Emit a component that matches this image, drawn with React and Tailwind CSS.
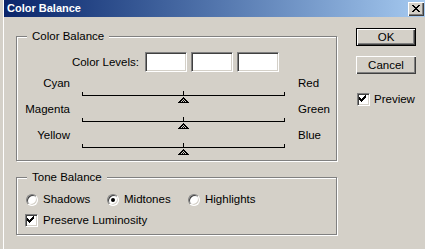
const etched = 'relative border border-[#808080] shadow-[inset_1px_1px_0_#fff,1px_1px_0_#fff]';
const sunken =
  'border border-t-[#808080] border-l-[#808080] border-b-white border-r-white bg-white shadow-[inset_1px_1px_0_#404040,inset_-1px_-1px_0_#d4d0c8]';

function Group({ label, className, children }) {
  return (
    <div className={`${etched} ${className}`}>
      <span className="absolute left-[10px] top-[-7px] bg-[#d4d0c8] px-[5px] leading-[13px]">{label}</span>
      {children}
    </div>
  );
}

function Thumb({ cx, y }) {
  const px = [];
  for (let i = 0; i < 6; i++) {
    for (let x = cx - i; x <= cx + i; x++) {
      const edge = x === cx - i || x === cx + i || i === 5;
      const dark = edge || (x + i) % 2 === 0;
      px.push(<rect key={`${i}-${x}`} x={x} y={y + i} width="1" height="1" fill={dark ? '#000' : '#d4d0c8'} />);
    }
  }
  return px;
}

function Slider({ left, right }) {
  return (
    <div className="h-[26px]">
      <div className="flex h-[13px] leading-[13px]">
        <span className="w-[53px] text-right">{left}</span>
        <span className="ml-[228px]">{right}</span>
      </div>
      <svg width="203" height="13" className="ml-[65px] block" shapeRendering="crispEdges">
        <rect x="0" y="5" width="203" height="1" fill="#000" />
        <rect x="0" y="2" width="1" height="3" fill="#000" />
        <rect x="202" y="2" width="1" height="3" fill="#000" />
        <rect x="101" y="1" width="1" height="4" fill="#000" />
        <Thumb cx={101} y={7} />
      </svg>
    </div>
  );
}

function Check({ checked }) {
  return (
    <div className={`h-[13px] w-[13px] ${sunken}`}>
      {checked && (
        <svg width="11" height="11" className="block" shapeRendering="crispEdges">
          {[2, 3, 4, 5, 6, 7, 8].map((x, i) => {
            const top = [4, 5, 6, 5, 4, 3, 2][i];
            return <rect key={x} x={x - 1} y={top - 1} width="1" height="3" fill="#000" />;
          })}
        </svg>
      )}
    </div>
  );
}

function Radio({ label, selected }) {
  return (
    <div className="flex w-[81px] items-center">
      <div className="flex h-[12px] w-[12px] items-center justify-center rounded-full border border-t-[#808080] border-l-[#808080] border-b-white border-r-white bg-white shadow-[inset_1px_1px_0_#404040,inset_-1px_-1px_0_#d4d0c8]">
        {selected && <div className="h-[4px] w-[4px] rounded-full bg-black" />}
      </div>
      <span className="ml-[5px] leading-[13px]">{label}</span>
    </div>
  );
}

function Button({ children, primary }) {
  const face = (
    <div className="flex h-full w-full items-center justify-center bg-[#d4d0c8] shadow-[inset_1px_1px_0_#fff,inset_-1px_-1px_0_#404040,inset_-2px_-2px_0_#808080] leading-[13px]">
      {children}
    </div>
  );
  return primary ? (
    <div className="h-[18px] w-[60px] border border-black">{face}</div>
  ) : (
    <div className="h-[18px] w-[60px]">{face}</div>
  );
}

export default function App() {
  return (
    <div className="h-[249px] w-[425px] overflow-hidden bg-[#d4d0c8] pl-[3px] font-['Liberation_Sans',Arial,sans-serif] text-[11.5px] text-black">
      <div className="h-full border-l border-white">
        <div className="flex h-[17px] items-center justify-between bg-linear-to-r from-[#0a246a] to-[#a6caf0] pl-[3px] pr-[1px]">
          <span className="text-[11px] font-bold leading-[13px] text-white">Color Balance</span>
          <div className="flex h-[14px] w-[16px] items-center justify-center bg-[#d4d0c8] shadow-[inset_1px_1px_0_#fff,inset_-1px_-1px_0_#404040,inset_-2px_-2px_0_#808080]">
            <svg width="8" height="7" className="mb-[1px] block" shapeRendering="crispEdges">
              <path d="M0 0h2v1h-2zM6 0h2v1h-2zM1 1h2v1h-2zM5 1h2v1h-2zM2 2h4v1h-4zM3 3h2v1h-2zM2 4h4v1h-4zM1 5h2v1h-2zM5 5h2v1h-2zM0 6h2v1h-2zM6 6h2v1h-2z" fill="#000" />
            </svg>
          </div>
        </div>

        <div className="flex items-start pl-[12px]">
          <div className="flex flex-col">
            <Group label="Color Balance" className="mt-[19px] h-[125px] w-[321px] pt-[15px]">
              <div className="flex h-[20px] items-center">
                <span className="w-[122px] text-right leading-[13px]">Color Levels:</span>
                <div className="ml-[6px] flex gap-[4px]">
                  <div className={`h-[20px] w-[42px] ${sunken}`} />
                  <div className={`h-[20px] w-[42px] ${sunken}`} />
                  <div className={`h-[20px] w-[42px] ${sunken}`} />
                </div>
              </div>
              <div className="mt-[5px]">
                <Slider left="Cyan" right="Red" />
                <Slider left="Magenta" right="Green" />
                <Slider left="Yellow" right="Blue" />
              </div>
            </Group>

            <Group label="Tone Balance" className="mt-[16px] h-[58px] w-[321px] pt-[15px]">
              <div className="flex h-[13px] items-center pl-[9px]">
                <Radio label="Shadows" />
                <Radio label="Midtones" selected />
                <Radio label="Highlights" />
              </div>
              <div className="mt-[8px] flex items-center pl-[8px]">
                <Check checked />
                <span className="ml-[5px] leading-[13px]">Preserve Luminosity</span>
              </div>
            </Group>
          </div>

          <div className="ml-[19px] mt-[11px] flex flex-col">
            <Button primary>OK</Button>
            <div className="mt-[10px]">
              <Button>Cancel</Button>
            </div>
            <div className="ml-[1px] mt-[19px] flex items-center">
              <Check checked />
              <span className="ml-[4px] leading-[13px]">Preview</span>
            </div>
          </div>
        </div>
      </div>
    </div>
  );
}
